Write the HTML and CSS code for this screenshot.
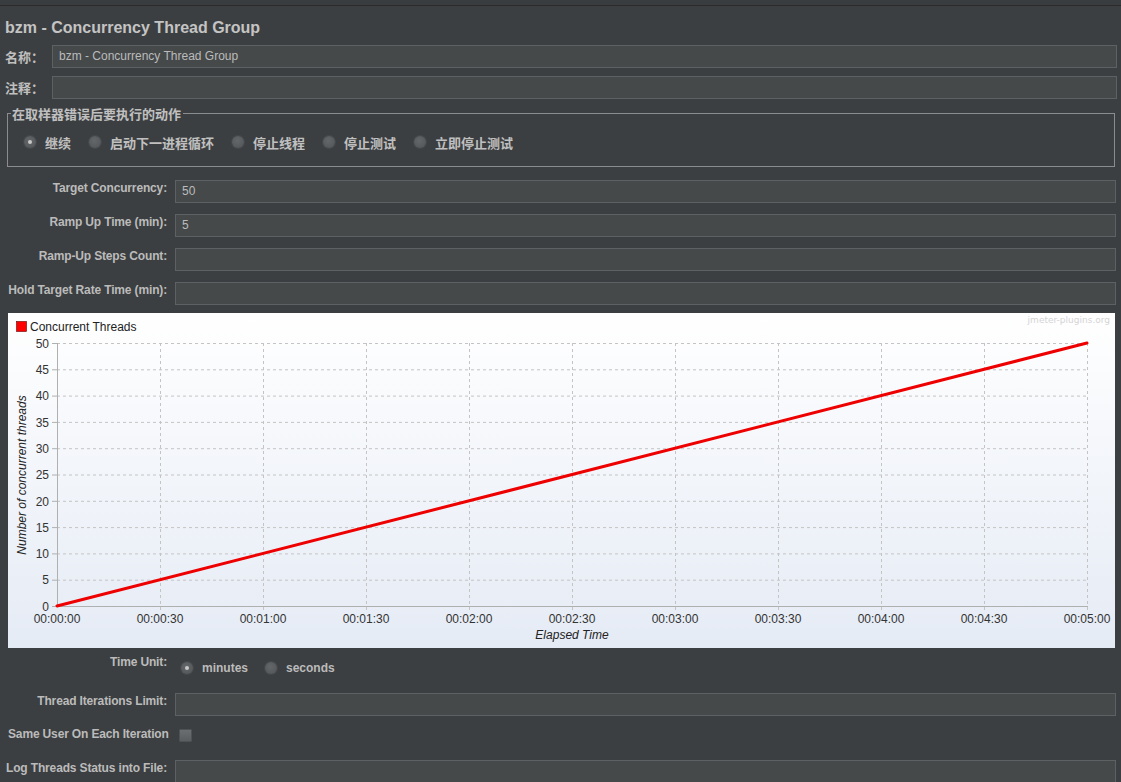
FILE: index.html
```html
<!DOCTYPE html>
<html>
<head>
<meta charset="utf-8">
<link rel="stylesheet" href="styles.css">
</head>
<body>
<div class="topbar"></div>
<div class="title">bzm - Concurrency Thread Group</div>

<div class="namerow">
  <span class="cnlabel">名称：</span>
  <div class="input">bzm - Concurrency Thread Group</div>
</div>
<div class="namerow">
  <span class="cnlabel">注释：</span>
  <div class="input"></div>
</div>

<fieldset class="group">
  <legend>在取样器错误后要执行的动作</legend>
  <div class="radios">
    <label class="radio"><span class="dot on"></span>继续</label>
    <label class="radio"><span class="dot"></span>启动下一进程循环</label>
    <label class="radio"><span class="dot"></span>停止线程</label>
    <label class="radio"><span class="dot"></span>停止测试</label>
    <label class="radio"><span class="dot"></span>立即停止测试</label>
  </div>
</fieldset>

<div class="rows">
  <div class="row"><div class="lbl">Target Concurrency:</div><div class="input">50</div></div>
  <div class="row"><div class="lbl">Ramp Up Time (min):</div><div class="input">5</div></div>
  <div class="row"><div class="lbl">Ramp-Up Steps Count:</div><div class="input"></div></div>
  <div class="row"><div class="lbl">Hold Target Rate Time (min):</div><div class="input"></div></div>
</div>

<div class="chart">
<svg width="1107" height="335" viewBox="0 0 1107 335" xmlns="http://www.w3.org/2000/svg">
  <defs>
    <linearGradient id="bg" x1="0" y1="0" x2="0" y2="1">
      <stop offset="0" stop-color="#ffffff"/>
      <stop offset="1" stop-color="#e5ebf5"/>
    </linearGradient>
  </defs>
  <rect x="0" y="0" width="1107" height="335" fill="url(#bg)"/>
  <g stroke="#c4c4c4" stroke-width="1" stroke-dasharray="3,3" fill="none">
    <line x1="49" y1="30.5" x2="1079" y2="30.5"/>
    <line x1="49" y1="56.8" x2="1079" y2="56.8"/>
    <line x1="49" y1="83.1" x2="1079" y2="83.1"/>
    <line x1="49" y1="109.4" x2="1079" y2="109.4"/>
    <line x1="49" y1="135.7" x2="1079" y2="135.7"/>
    <line x1="49" y1="162" x2="1079" y2="162"/>
    <line x1="49" y1="188.3" x2="1079" y2="188.3"/>
    <line x1="49" y1="214.6" x2="1079" y2="214.6"/>
    <line x1="49" y1="240.9" x2="1079" y2="240.9"/>
    <line x1="49" y1="267.2" x2="1079" y2="267.2"/>
    <line x1="152.5" y1="30" x2="152.5" y2="297"/>
    <line x1="255.5" y1="30" x2="255.5" y2="297"/>
    <line x1="358.5" y1="30" x2="358.5" y2="297"/>
    <line x1="461.5" y1="30" x2="461.5" y2="297"/>
    <line x1="564.5" y1="30" x2="564.5" y2="297"/>
    <line x1="667.5" y1="30" x2="667.5" y2="297"/>
    <line x1="770.5" y1="30" x2="770.5" y2="297"/>
    <line x1="873.5" y1="30" x2="873.5" y2="297"/>
    <line x1="976.5" y1="30" x2="976.5" y2="297"/>
    <line x1="1079.5" y1="30" x2="1079.5" y2="297"/>
  </g>
  <g stroke="#b0b0b0" stroke-width="1">
    <line x1="49.5" y1="30" x2="49.5" y2="294"/>
    <line x1="49" y1="293.5" x2="1080" y2="293.5"/>
    <line x1="44" y1="30.5" x2="49" y2="30.5"/>
    <line x1="44" y1="56.8" x2="49" y2="56.8"/>
    <line x1="44" y1="83.1" x2="49" y2="83.1"/>
    <line x1="44" y1="109.4" x2="49" y2="109.4"/>
    <line x1="44" y1="135.7" x2="49" y2="135.7"/>
    <line x1="44" y1="162" x2="49" y2="162"/>
    <line x1="44" y1="188.3" x2="49" y2="188.3"/>
    <line x1="44" y1="214.6" x2="49" y2="214.6"/>
    <line x1="44" y1="240.9" x2="49" y2="240.9"/>
    <line x1="44" y1="267.2" x2="49" y2="267.2"/>
    <line x1="44" y1="293.5" x2="49" y2="293.5"/>
  </g>
  <g class="ylab" text-anchor="end">
    <text x="41" y="35">50</text>
    <text x="41" y="61">45</text>
    <text x="41" y="87">40</text>
    <text x="41" y="114">35</text>
    <text x="41" y="140">30</text>
    <text x="41" y="166">25</text>
    <text x="41" y="193">20</text>
    <text x="41" y="219">15</text>
    <text x="41" y="245">10</text>
    <text x="41" y="271">5</text>
    <text x="41" y="298">0</text>
  </g>
  <g class="xlab" text-anchor="middle">
    <text x="49" y="310">00:00:00</text>
    <text x="152" y="310">00:00:30</text>
    <text x="255" y="310">00:01:00</text>
    <text x="358" y="310">00:01:30</text>
    <text x="461" y="310">00:02:00</text>
    <text x="564" y="310">00:02:30</text>
    <text x="667" y="310">00:03:00</text>
    <text x="770" y="310">00:03:30</text>
    <text x="873" y="310">00:04:00</text>
    <text x="976" y="310">00:04:30</text>
    <text x="1079" y="310">00:05:00</text>
  </g>
  <text class="axtitle" x="564" y="326" text-anchor="middle">Elapsed Time</text>
  <text class="axtitle" transform="translate(18,162) rotate(-90)" text-anchor="middle">Number of concurrent threads</text>
  <line x1="49" y1="293" x2="1079" y2="30" stroke="#ee0000" stroke-width="3" stroke-linecap="round"/>
  <rect x="8.5" y="8.5" width="10" height="10" fill="#ff0000" stroke="#660000" stroke-width="0.6"/>
  <text class="legend" x="22" y="17.5">Concurrent Threads</text>
  <text class="brand" x="1102" y="10" text-anchor="end">jmeter-plugins.org</text>
</svg>
</div>

<div class="row unitrow">
  <div class="lbl">Time Unit:</div>
  <div class="units">
    <label class="radio"><span class="dot on"></span>minutes</label>
    <label class="radio"><span class="dot"></span>seconds</label>
  </div>
</div>
<div class="row row2"><div class="lbl">Thread Iterations Limit:</div><div class="input"></div></div>
<div class="checkrow">
  <div class="lbl left">Same User On Each Iteration</div>
  <span class="check"></span>
</div>
<div class="row row3"><div class="lbl">Log Threads Status into File:</div><div class="input"></div></div>
</body>
</html>
```

FILE: styles.css
```css
html, body {
  margin: 0;
  padding: 0;
  background: #3c3f41;
  height: 782px;
  overflow: hidden;
}
body {
  font-family: "Liberation Sans", Arial, "Noto Sans CJK SC", sans-serif;
  color: #bbbbbb;
  font-size: 12px;
}
.topbar {
  height: 5px;
  border-bottom: 1px solid #2b2b2b;
  background: #3a3d3f;
}
.title {
  font-size: 16px;
  font-weight: bold;
  color: #c4c4c4;
  padding: 12px 0 0 5px;
  height: 27px;
  line-height: 20px;
}
.namerow {
  display: flex;
  align-items: center;
  height: 23px;
  margin-bottom: 8px;
  padding-right: 4px;
}
.cnlabel {
  width: 52px;
  padding-left: 5px;
  box-sizing: border-box;
  font-family: "Noto Sans CJK SC", sans-serif;
  font-size: 13px;
  font-weight: bold;
  color: #c0c0c0;
}
.input {
  flex: 1;
  height: 23px;
  box-sizing: border-box;
  background: #45494a;
  border: 1px solid #5e6163;
  color: #bbbbbb;
  font-size: 12px;
  line-height: 21px;
  padding-left: 6px;
}
.group {
  margin: -1px 6px 0 7px;
  border: 1px solid #8a8c8e;
  border-radius: 0;
  padding: 0;
  height: 61px;
  box-sizing: border-box;
}
.group legend {
  font-family: "Noto Sans CJK SC", sans-serif;
  font-size: 13px;
  font-weight: bold;
  color: #c0c0c0;
  padding: 0 2px 0 1px;
  margin-left: 3px;
  line-height: 15px;
}
.radios {
  display: flex;
  padding: 13px 0 0 16px;
}
.radio {
  display: flex;
  align-items: center;
  font-family: "Noto Sans CJK SC", sans-serif;
  font-size: 13px;
  font-weight: bold;
  color: #c0c0c0;
  margin-right: 18px;
  height: 16px;
}
.dot {
  width: 12px;
  height: 12px;
  border-radius: 50%;
  background: radial-gradient(circle at 45% 40%, #63676a, #505457);
  box-shadow: 0 0 0 1px #46494b;
  margin-right: 9px;
  position: relative;
  display: inline-block;
  flex: none;
}
.dot.on::after {
  content: "";
  position: absolute;
  left: 4px;
  top: 4px;
  width: 4px;
  height: 4px;
  border-radius: 50%;
  background: #c8c8c8;
}
.rows {
  margin-top: 13px;
}
.row {
  display: flex;
  align-items: center;
  height: 23px;
  margin-bottom: 11px;
  padding-right: 5px;
}
.lbl {
  display: flex;
  justify-content: flex-end;
  width: 159px;
  margin-left: 8px;
  margin-right: 8px;
  font-weight: bold;
  font-size: 12px;
  letter-spacing: -0.15px;
  color: #bbbbbb;
  margin-top: -8px;
  white-space: nowrap;
  flex: none;
}
.chart {
  margin: -3px 6px 0 8px;
  height: 335px;
  background: #fff;
}
.chart svg { display: block; }
.ylab text, .xlab text {
  font-family: "Liberation Sans", Arial, sans-serif;
  font-size: 12px;
  fill: #333333;
}
.axtitle {
  font-family: "Liberation Sans", Arial, sans-serif;
  font-size: 12px;
  font-style: italic;
  fill: #222222;
}
.legend {
  font-family: "Liberation Sans", Arial, sans-serif;
  font-size: 12px;
  fill: #222222;
}
.brand {
  font-family: "DejaVu Sans", sans-serif;
  font-size: 9px;
  fill: #d4d4d4;
}
.unitrow {
  margin-top: 8px;
  margin-bottom: 14px;
}
.unitrow .lbl { margin-top: -12px; }
.units {
  display: flex;
  padding-left: 6px;
}
.units .radio {
  font-family: "Liberation Sans", Arial, sans-serif;
  font-size: 12px;
  margin-right: 17px;
  color: #bbbbbb;
}
.row2 { margin-bottom: 13px; }
.checkrow {
  display: flex;
  align-items: center;
  height: 20px;
  margin-bottom: 11px;
}
.lbl.left {
  width: auto;
  justify-content: flex-start;
  margin-left: 8px;
  margin-right: 10px;
  margin-top: -10px;
}
.check {
  width: 13px;
  height: 13px;
  box-sizing: border-box;
  background: linear-gradient(#6a6e70, #5a5e61);
  border: 1px solid #4e5254;
  border-radius: 1px;
  margin-top: -7px;
}
.row3 { margin-bottom: 0; }
```
